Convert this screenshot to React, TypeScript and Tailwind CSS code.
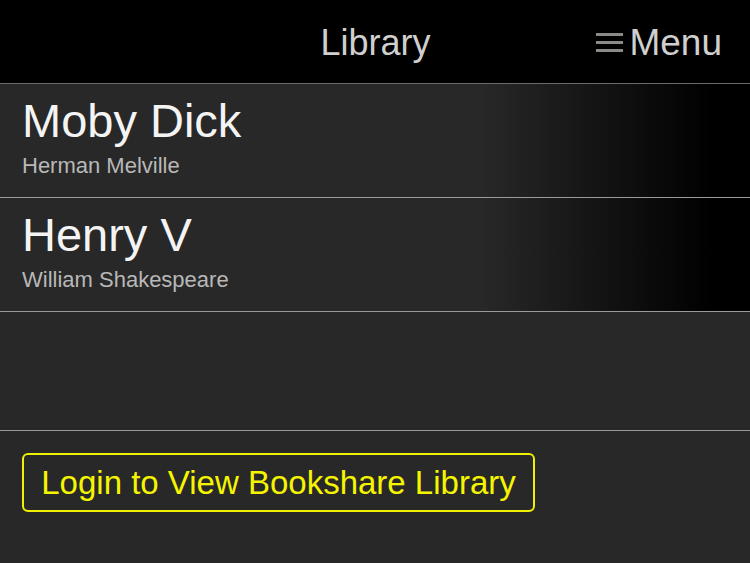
import React from "react";

const books = [
  { title: "Moby Dick", author: "Herman Melville" },
  { title: "Henry V", author: "William Shakespeare" },
];

export default function App() {
  return (
    <div
      className="w-[750px] h-[563px] bg-[#282828] flex flex-col overflow-hidden"
      style={{ fontFamily: '"Liberation Sans", Arial, sans-serif' }}
    >
      <header className="h-[84px] bg-black border-b border-[#6a6a6a] flex items-center relative shrink-0">
        <div className="flex-1 text-center text-[36px] leading-none text-[#cfcfcf] pl-[1px] pt-[2px]">Library</div>
        <div className="absolute right-[28px] top-0 h-full flex items-center gap-[6px] pt-[2px]">
          <div className="flex flex-col gap-[5px] w-[27px]">
            <div className="h-[3px] bg-[#8a8a86]" />
            <div className="h-[3px] bg-[#8a8a86]" />
            <div className="h-[3px] bg-[#8a8a86]" />
          </div>
          <span className="text-[37px] leading-none text-[#cfcfcf]">Menu</span>
        </div>
      </header>
      {books.map((b) => (
        <div
          key={b.title}
          className="h-[114px] shrink-0 border-b border-[#9a9a9a] bg-[linear-gradient(to_right,#282828_64%,#000_95%)] pl-[22px] pt-[11px] flex flex-col"
        >
          <div className="text-[47px] leading-[52px] text-[#f4f4f4]">{b.title}</div>
          <div className="text-[22px] leading-[26px] text-[#b8b8b8] mt-[6px]">{b.author}</div>
        </div>
      ))}
      <div className="h-[119px] shrink-0 border-b border-[#9a9a9a]" />
      <div className="pl-[22px] pt-[22px]">
        <button className="w-[513px] h-[59px] border-2 border-[#f0f000] rounded-[6px] text-[33px] leading-none text-[#f5f500] flex items-center justify-center">
          Login to View Bookshare Library
        </button>
      </div>
    </div>
  );
}
